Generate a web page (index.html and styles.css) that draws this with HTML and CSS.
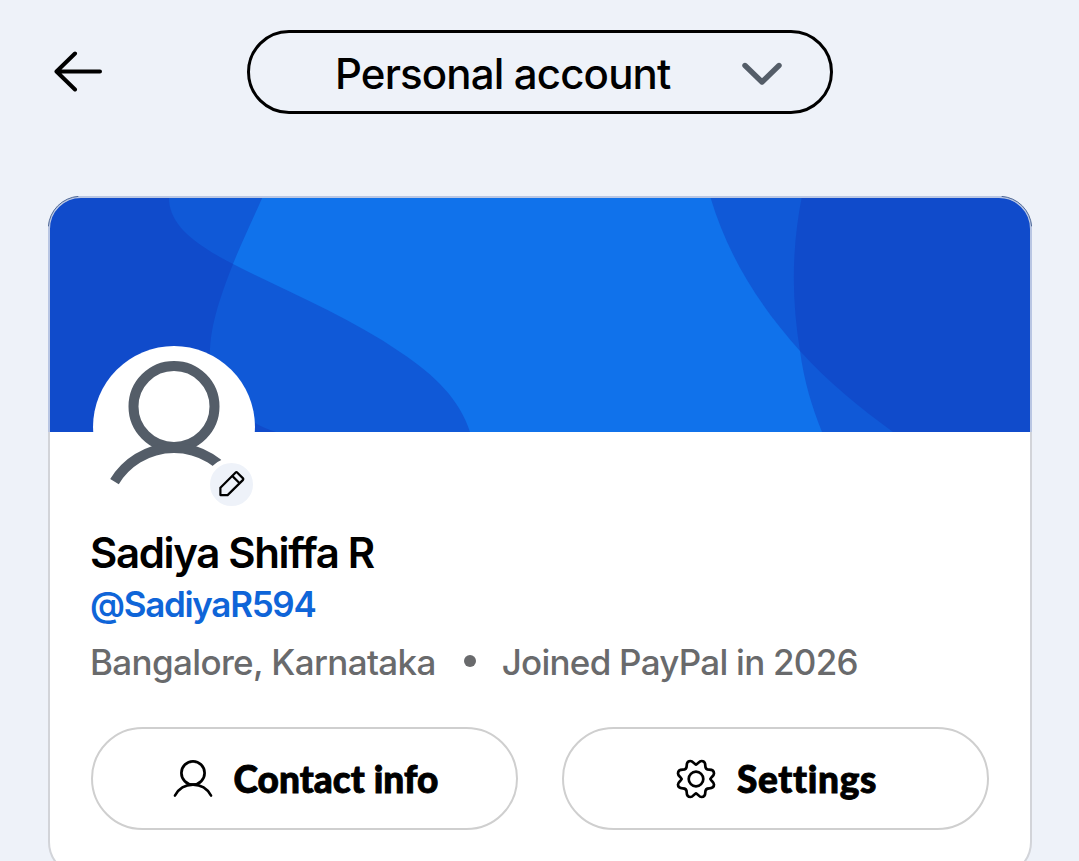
FILE: index.html
```html
<!DOCTYPE html>
<html lang="en">
<head>
    <meta charset="UTF-8">
    <meta name="viewport" content="width=device-width, initial-scale=1.0">
    <title>Personal account</title>
    <link rel="stylesheet" href="styles.css">
</head>
<body>
    <header class="topbar">
        <button class="back" aria-label="Back">
            <svg width="50" height="42" viewBox="0 0 50 42">
                <path d="M22 2.5 3.5 20.5 22 38.5M4 20.5h43"/>
            </svg>
        </button>
        <button class="account-switch">
            <span class="account-label">Personal account</span>
            <svg class="chevron" width="42" height="24" viewBox="0 0 42 24">
                <path d="M4 3.5 21 20 38 3.5"/>
            </svg>
        </button>
    </header>

    <main class="card">
        <svg class="banner" width="984" height="236" viewBox="0 0 984 236">
            <defs>
                <clipPath id="banner-shape">
                    <path d="M1.5 236V33A31.5 31.5 0 0 1 33 1.5H951A31.5 31.5 0 0 1 982.5 33V236z"/>
                </clipPath>
            </defs>
            <g clip-path="url(#banner-shape)">
                <path fill="#1072eb" d="M0 0h984v236H0z"/>
                <g fill="#1039bd" fill-opacity=".44">
                    <path d="M0 0H215C205 23 195 43 185 68C170 106 162 133 162 158C164 185 186 224 228 236H0z"/>
                    <path d="M0 0H121C120 25 140 45 185 68C235 94 300 120 352 156C387 179 412 204 422 236H0z"/>
                    <path d="M984 0H662C680 60 710 108 752 155C779 185 812 212 845 236H984z"/>
                    <path d="M984 0H754C744 50 743 100 752 155C756 185 764 211 774 236H984z"/>
                </g>
            </g>
            <path class="banner-edge" d="M1 236V33A32 32 0 0 1 33 1H951A32 32 0 0 1 983 33V236"/>
            <path class="banner-hairline" d="M.4 30A32 32 0 0 1 30 .4M954 .4A32 32 0 0 1 983.6 30"/>
        </svg>

        <div class="profile">
            <div class="avatar">
                <svg width="162" height="162" viewBox="0 0 162 162">
                    <circle cx="81" cy="60.5" r="40.5"/>
                    <path d="M21.5 135.6A69.4 69.4 0 0 1 140.5 135.6"/>
                </svg>
                <button class="edit" aria-label="Edit photo">
                    <svg width="30" height="30" viewBox="0.6 0.9 30 30">
                        <path d="M19 3.6Q20 2.6 21 3.6L26.4 9Q27.4 10 26.4 11L11.2 26H4V18.6zM15.8 6.8l7.4 7.4"/>
                    </svg>
                </button>
            </div>

            <h1 class="name">Sadiya Shiffa R</h1>
            <a class="handle">@SadiyaR594</a>
            <p class="meta">
                <span class="place">Bangalore, Karnataka</span>
                <span class="dot"></span>
                <span class="joined">Joined PayPal in 2026</span>
            </p>

            <div class="actions">
                <button class="action">
                    <svg width="40" height="40" viewBox="0 0 40 40">
                        <circle cx="20" cy="14" r="11.6"/>
                        <path d="M2 36.5A20.3 20.3 0 0 1 38 36.5"/>
                    </svg>
                    <span class="contact-label">Contact info</span>
                </button>
                <button class="action">
                    <svg width="40" height="40" viewBox="-20 -20 40 40">
                        <defs>
                            <path id="teeth" d="M0-14.6C1.8-14.6 3-18 5.5-18C8.5-18 9.3-16 9.3-13.2C9.3-10.5 10.5-9.3 13.2-9.3C16-9.3 18-8.5 18-5.5C18-3 14.6-1.8 14.6 0"/>
                        </defs>
                        <use href="#teeth"/>
                        <use href="#teeth" transform="rotate(90)"/>
                        <use href="#teeth" transform="rotate(180)"/>
                        <use href="#teeth" transform="rotate(270)"/>
                        <circle r="7.3"/>
                    </svg>
                    <span class="settings-label">Settings</span>
                </button>
            </div>
        </div>
    </main>
</body>
</html>
```
FILE: styles.css
```css
* {
    box-sizing: border-box;
}
body {
    margin: 0;
    height: 861px;
    overflow: hidden;
    background: #eef2f9;
    color: #000;
    font-family: Inter, "Liberation Sans", sans-serif;
}
button {
    margin: 0;
    padding: 0;
    border: none;
    background: none;
    color: inherit;
    font: inherit;
    cursor: pointer;
}
svg {
    display: block;
    flex: none;
    fill: none;
    stroke-linecap: round;
    stroke-linejoin: round;
}
.topbar {
    display: flex;
    align-items: center;
    height: 144px;
    padding-left: 53px;
}
.back {
    width: 50px;
    margin-right: 144px;
}
.back svg {
    stroke: #000;
    stroke-width: 4;
}
.account-switch {
    display: flex;
    align-items: center;
    justify-content: space-between;
    width: 586px;
    height: 84px;
    padding: 4px 47px 0 85px;
    border: 3px solid #000;
    border-radius: 42px;
}
.account-label {
    font-size: 42px;
    font-weight: 450;
    letter-spacing: -.85px;
    line-height: 50px;
    white-space: nowrap;
}
.chevron {
    stroke: #545d68;
    stroke-width: 5.4;
}
.card {
    width: 984px;
    height: 680px;
    margin: 52px 0 0 48px;
    border: 2px solid #d2d4d9;
    border-radius: 34px;
    background: #fff;
}
.banner {
    margin: -2px 0 0 -2px;
}
.banner path {
    stroke: none;
}
.banner .banner-edge {
    stroke: #b9c6e3;
    stroke-width: 2;
    stroke-linecap: butt;
}
.banner .banner-hairline {
    stroke: #345084;
    stroke-width: .8;
}
.profile {
    padding: 0 41px;
}
.avatar {
    position: relative;
    width: 162px;
    height: 162px;
    margin: -86px 0 19px 2px;
    border-radius: 50%;
    background: #fff;
}
.avatar > svg {
    stroke: #545d68;
    stroke-width: 10;
    stroke-linecap: butt;
}
.edit {
    position: absolute;
    right: -3px;
    bottom: -3px;
    display: flex;
    align-items: center;
    justify-content: center;
    width: 53px;
    height: 53px;
    border: 5px solid #fff;
    border-radius: 50%;
    background: #eef2f9;
}
.edit svg {
    stroke: #000;
    stroke-width: 2.2;
}
.name {
    margin: 0 0 3px -1px;
    font-size: 42px;
    font-weight: 600;
    letter-spacing: -1.35px;
    line-height: 52px;
}
.handle {
    display: block;
    margin-left: -1px;
    color: #0f65d8;
    font-size: 35px;
    font-weight: 600;
    letter-spacing: -1.3px;
    line-height: 44px;
}
.meta {
    display: flex;
    align-items: center;
    margin: 14px 0 43px -1px;
    color: #696a6c;
    font-size: 35px;
    font-weight: 450;
    line-height: 44px;
    white-space: nowrap;
}
.place {
    letter-spacing: -.65px;
}
.joined {
    letter-spacing: -.75px;
}
.dot {
    width: 12px;
    height: 12px;
    margin: 0 26px 3px 28px;
    border-radius: 50%;
    background: #696a6c;
}
.actions {
    display: grid;
    grid-template-columns: 427px 427px;
    gap: 44px;
}
.action {
    display: flex;
    align-items: center;
    justify-content: center;
    gap: 21px;
    height: 103px;
    padding-left: 2px;
    border: 2px solid #cfcfcf;
    border-radius: 52px;
    font-family: Lato, "Liberation Sans", sans-serif;
    font-size: 37px;
    font-weight: 900;
    white-space: nowrap;
    -webkit-text-stroke: .9px #000;
}
.action svg {
    stroke: #000;
    stroke-width: 2.7;
}
.contact-label {
    letter-spacing: .05px;
}
.settings-label {
    letter-spacing: .7px;
}
```
